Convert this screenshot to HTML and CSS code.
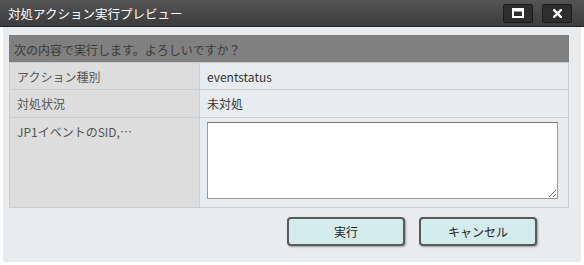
FILE: index.html
```html
<!DOCTYPE html>
<html lang="ja">
<head>
  <meta charset="UTF-8">
  <title>対処アクション実行プレビュー</title>
  <link rel="stylesheet" href="styles.css">
</head>
<body>
  <div class="window">
    <!-- Title bar -->
    <div class="titlebar">
      <span class="title">対処アクション実行プレビュー</span>
      <div class="title-buttons">
        <button class="tb-btn" title="最大化">
          <svg width="12" height="10" viewBox="0 0 12 10"><rect x="1" y="1" width="10" height="8" fill="none" stroke="#fff" stroke-width="2"/><rect x="1" y="1" width="10" height="2.5" fill="#fff"/></svg>
        </button>
        <button class="tb-btn" title="閉じる">
          <svg width="9" height="9" viewBox="0 0 9 9"><path d="M1.2 1.2 L7.8 7.8 M7.8 1.2 L1.2 7.8" stroke="#fff" stroke-width="2.4" stroke-linecap="square"/></svg>
        </button>
      </div>
    </div>

    <!-- Content -->
    <div class="content">
      <table class="preview">
        <tr class="confirm-row">
          <td colspan="2">次の内容で実行します。よろしいですか？</td>
        </tr>
        <tr class="row-short">
          <td class="label">アクション種別</td>
          <td class="value">eventstatus</td>
        </tr>
        <tr class="row-short row-second">
          <td class="label">対処状況</td>
          <td class="value">未対処</td>
        </tr>
        <tr class="row-tall">
          <td class="label">JP1イベントのSID,…</td>
          <td class="value"><textarea></textarea></td>
        </tr>
      </table>

      <div class="actions">
        <button class="button">実行</button>
        <button class="button">キャンセル</button>
      </div>
    </div>
  </div>
</body>
</html>
```

FILE: styles.css
```css
/* General */
body {
  margin: 0;
  background-color: #fff;
  font-family: "Noto Sans CJK JP", "Noto Sans", sans-serif;
  font-size: 12px;
  color: #444;
}

.window {
  width: 584px;
}

/* Title bar */
.titlebar {
  height: 26px;
  display: flex;
  align-items: center;
  justify-content: space-between;
  padding-left: 8px;
  background: linear-gradient(#545454, #3c3c3c);
  border-bottom: 1px solid #222;
}

.title {
  color: #fff;
  font-size: 12.5px;
}

.title-buttons {
  display: flex;
  gap: 9px;
  margin-right: 12px;
}

.tb-btn {
  width: 30px;
  height: 19px;
  padding: 0;
  display: flex;
  align-items: center;
  justify-content: center;
  background-color: #2e2e2e;
  border: 1px solid #1c1c1c;
  border-radius: 2px;
}

/* Content area */
.content {
  margin: 0 3px;
  height: 235px;
  padding: 8px 0 0 6px;
  box-sizing: border-box;
  background-color: #e9ecef;
}

.preview {
  width: 560px;
  border-collapse: collapse;
  border: 1px solid #c9c9c9;
}

.preview td {
  padding: 0;
  border: 1px solid #cdcdcd;
}

.confirm-row td {
  height: 26px;
  padding-left: 4px;
  background-color: #808080;
  color: #3a3a3a;
  border-color: #808080;
  border-bottom-color: #c9c9c9;
}

.row-short td {
  height: 26px;
}

.row-second td {
  height: 27px;
}

.label {
  width: 182px;
  padding-left: 7px !important;
  background-color: #dddddd;
  color: #555;
}

.value {
  padding-left: 7px !important;
  color: #333;
}

.row-tall td {
  height: 84px;
  vertical-align: top;
}

.row-tall .label {
  padding-top: 5px !important;
}

.row-tall .value {
  padding-top: 4px !important;
}

.row-tall textarea {
  display: block;
  width: 351px;
  height: 77px;
  box-sizing: border-box;
  margin: 0;
  border: 1px solid #9a9a9a;
  border-top-color: #7a7a7a;
  background-color: #fff;
}

/* Action buttons */
.actions {
  display: flex;
  gap: 14px;
  margin-top: 9px;
  padding-left: 278px;
}

.button {
  width: 118px;
  height: 29px;
  font-family: inherit;
  font-size: 12px;
  color: #222;
  background-color: #d4ebec;
  border: 2px solid #5a5a5a;
  border-radius: 4px;
  box-shadow: 1px 1px 2px rgba(0, 0, 0, 0.35);
}
```
